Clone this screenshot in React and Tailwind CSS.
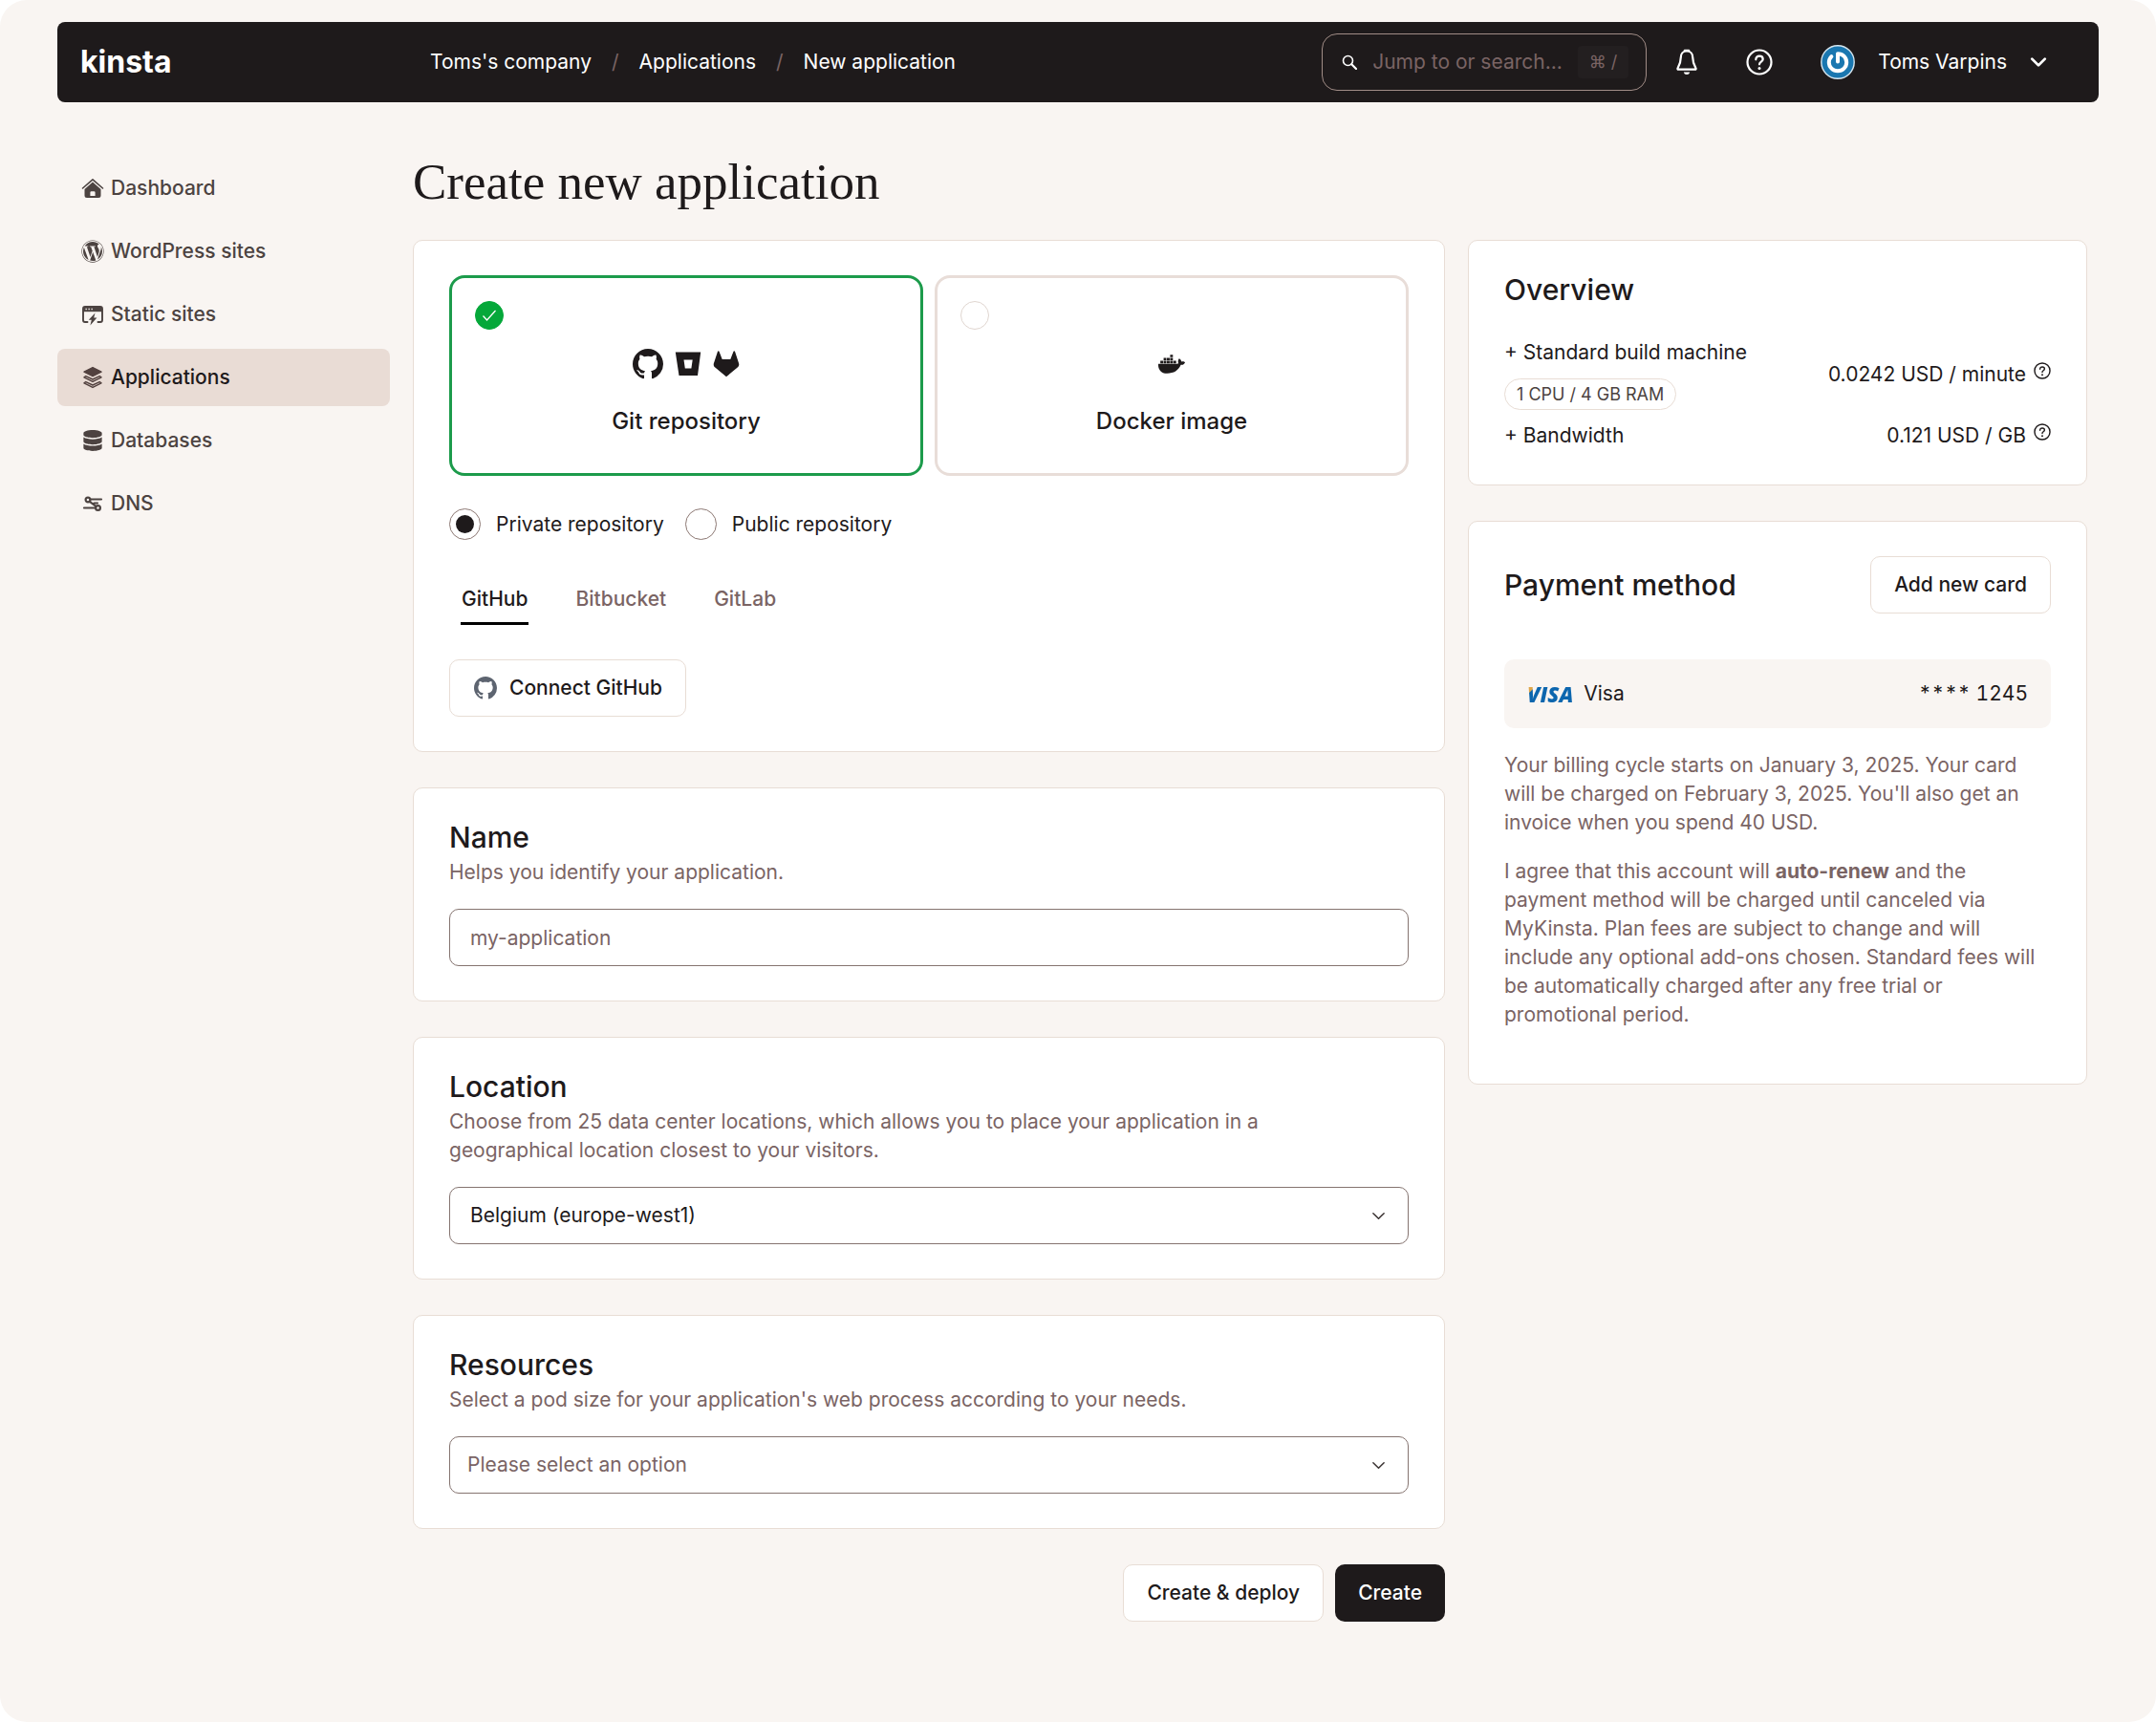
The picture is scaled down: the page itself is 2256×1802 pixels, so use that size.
import { useState } from "react";
import { FaWordpress, FaDatabase, FaDocker } from "react-icons/fa";

function GithubIcon({ className }) {
  return (
    <svg viewBox="0 0 16 16" className={className} fill="currentColor">
      <path d="M8 0C3.580 0 0 3.580 0 8c0 3.540 2.290 6.530 5.470 7.590.4.07.55-.17.55-.38 0-.19-.01-.82-.01-1.490-2.010.37-2.530-.49-2.690-.94-.09-.23-.48-.94-.82-1.130-.28-.15-.68-.52-.01-.53.63-.01 1.080.58 1.230.82.72 1.210 1.870.87 2.330.66.07-.52.28-.87.51-1.070-1.780-.2-3.640-.89-3.640-3.950 0-.87.31-1.590.82-2.150-.08-.2-.36-1.020.08-2.120 0 0 .67-.21 2.200.82.64-.18 1.320-.27 2-.27.68 0 1.360.09 2 .27 1.530-1.040 2.200-.82 2.200-.82.44 1.100.16 1.920.08 2.120.51.56.82 1.270.82 2.150 0 3.070-1.870 3.750-3.650 3.950.29.25.54.73.54 1.480 0 1.070-.01 1.930-.01 2.200 0 .21.15.46.55.38A8.013 8.013 0 0 0 16 8c0-4.420-3.580-8-8-8z" />
    </svg>
  );
}

function HomeIcon() {
  return (
    <svg viewBox="0 0 24 24" className="w-6 h-6" fill="none">
      <path d="M1.500 12 12 2.800 22.500 12" stroke="currentColor" strokeWidth="1.600" strokeLinecap="round" strokeLinejoin="round" />
      <path
        d="M12 5.600 20.500 13v6.500A2.500 2.500 0 0 1 18 22H6a2.500 2.500 0 0 1-2.500-2.500V13zM10.600 15.200a1.200 1.200 0 0 0-1.200 1.200V20h5.200v-3.600a1.200 1.200 0 0 0-1.200-1.200z"
        fill="currentColor"
        fillRule="evenodd"
      />
    </svg>
  );
}

function StaticIcon() {
  return (
    <svg viewBox="0 0 24 24" className="w-6 h-6" fill="none">
      <path
        d="M6.500 20H4a2 2 0 0 1-2-2V6a2 2 0 0 1 2-2h16a2 2 0 0 1 2 2v12a2 2 0 0 1-2 2h-2.500"
        stroke="currentColor"
        strokeWidth="1.900"
        strokeLinecap="round"
      />
      <path d="M2 4.500h20V9.200H2z" fill="currentColor" />
      <path d="M4.500 6.500h1.300M7.500 6.500h1.300M10.500 6.500h1.300" stroke="#f9f5f2" strokeWidth="1.300" />
      <path d="M14.500 10.500 7.800 17.800h3L9.400 23.500l7-8.100h-3.200z" fill="currentColor" />
    </svg>
  );
}

function LayersIcon() {
  return (
    <svg viewBox="0 0 24 24" className="w-6 h-6" fill="none" stroke="currentColor" strokeWidth="1.500" strokeLinejoin="round" strokeLinecap="round">
      <path d="m12 1.600 9 4.500-9 4.500-9-4.500z" fill="currentColor" />
      <path d="M4.800 10.600 3 11.800l9 4.600 9-4.600-1.800-1.200L12 14z" />
      <path d="M4.800 16.600 3 17.800l9 4.600 9-4.600-1.800-1.200L12 20z" />
    </svg>
  );
}

function DnsIcon() {
  return (
    <svg viewBox="0 0 24 24" className="w-6 h-6" fill="none" stroke="currentColor" strokeWidth="2.200" strokeLinecap="round">
      <circle cx="7" cy="8" r="2.400" />
      <circle cx="17.500" cy="16.500" r="2.400" />
      <path d="M9.500 7.500H21M3 16.500h12M8.800 9.800l6.800 5.200M13.500 11.500H17" />
    </svg>
  );
}

function BitbucketIcon() {
  return (
    <svg viewBox="0 0 28 28" className="w-7 h-7" fill="currentColor">
      <path d="M.8 1.500h26.400L24 26H4.500zM9.500 9.500l1.300 9h6.600l1.300-9z" fillRule="evenodd" />
    </svg>
  );
}

function GitlabIcon() {
  return (
    <svg viewBox="0 0 28 28" className="w-7 h-7" fill="currentColor">
      <path d="M5 .8c.3-.7 1.200-.7 1.500 0L9.700 9h8.600L21.500.8c.3-.7 1.200-.7 1.500 0l4.100 12.500c.5 1.700 0 3.200-1.400 4.200L14 27.200 2.300 17.500C1 16.500.4 15 .9 13.300z" />
    </svg>
  );
}

function HelpIcon({ className }) {
  return (
    <svg viewBox="0 0 28 28" className={className} fill="none" stroke="currentColor" strokeWidth="2.200">
      <circle cx="14" cy="14" r="12.500" />
      <path d="M10.300 11.300c0-2.200 1.600-3.600 3.700-3.600s3.700 1.400 3.700 3.300c0 2.600-3.700 2.700-3.700 5.300" strokeLinecap="round" />
      <circle cx="14" cy="20.500" r="1.500" fill="currentColor" stroke="none" />
    </svg>
  );
}

function BellIcon() {
  return (
    <svg viewBox="0 0 28 28" className="w-7 h-7" fill="none" stroke="currentColor" strokeWidth="2.200" strokeLinejoin="round">
      <path d="M14 2.500c-4 0-6.200 3-6.200 6.500 0 5.500-1.200 7.800-3.300 11.500-.3.700 0 1.200.8 1.200h17.400c.8 0 1.100-.5.800-1.200-2.100-3.700-3.300-6-3.300-11.500 0-3.500-2.200-6.500-6.200-6.500z" />
      <path d="M11.800 1.800h4.400" strokeLinecap="round" />
      <path d="M10.800 24.500h6.400c-.4 1.700-1.600 2.500-3.200 2.500s-2.800-.8-3.200-2.500z" fill="currentColor" stroke="none" />
    </svg>
  );
}

function Chevron({ className }) {
  return (
    <svg viewBox="0 0 16 16" className={className} fill="none" stroke="currentColor" strokeLinecap="round" strokeLinejoin="round">
      <path d="m2 5 6 6 6-6" />
    </svg>
  );
}

function Avatar() {
  return (
    <svg viewBox="0 0 36 36" className="w-9 h-9" fill="none">
      <circle cx="18" cy="18" r="17.200" fill="#1a77b0" stroke="#d5e5ee" strokeWidth="1.400" />
      <path d="M18 17.500V9.300c5.400 0 9.200 4 9.200 9s-4 9-9.200 9-9.200-4-9.200-9c0-2.500 1-4.600 2.600-6.200" stroke="#fff" strokeWidth="4" strokeLinecap="round" strokeLinejoin="round" />
    </svg>
  );
}

const navItems = [
  { label: "Dashboard", icon: <HomeIcon /> },
  { label: "WordPress sites", icon: <FaWordpress className="w-6 h-6" /> },
  { label: "Static sites", icon: <StaticIcon /> },
  { label: "Applications", icon: <LayersIcon />, active: true },
  { label: "Databases", icon: <FaDatabase className="w-6 h-[22px]" /> },
  { label: "DNS", icon: <DnsIcon /> },
];

const crumbs = ["Toms's company", "Applications", "New application"];
const providers = ["GitHub", "Bitbucket", "GitLab"];

const secondaryButton =
  "h-[60px] px-6 flex items-center gap-3 rounded-[10px] border border-[#e8ddd5] bg-white font-medium";

function Header() {
  return (
    <header className="h-[84px] flex items-center rounded-lg bg-[#1e1a1b] text-white pl-6 pr-[54px]">
      <a href="#" className="w-[366px] text-[32px] leading-none font-bold">kinsta</a>
      <nav className="flex-1 flex items-center gap-[21px]">
        {crumbs.map((crumb, i) => (
          <span key={crumb} className="flex gap-[21px]">
            {i > 0 && <span className="text-[#7a6464]">/</span>}
            <a href="#">{crumb}</a>
          </span>
        ))}
      </nav>
      <label className="w-[340px] h-[60px] flex items-center rounded-2xl border border-[#a08c86] pl-5 pr-[18px]">
        <svg viewBox="0 0 16 16" className="w-4 h-4 shrink-0 mr-4" fill="none" stroke="currentColor" strokeWidth="1.600" strokeLinecap="round">
          <circle cx="6.500" cy="6.500" r="5" />
          <path d="m10.300 10.300 4.700 4.700" strokeWidth="2.200" />
        </svg>
        <input
          type="text"
          aria-label="Search"
          placeholder="Jump to or search..."
          className="flex-1 min-w-0 bg-transparent outline-none placeholder:text-[#7a6464]"
        />
        <kbd className="h-[34px] px-3 flex items-center rounded bg-[#231f20] text-[18px] text-[#7a6464] font-[Inter,sans-serif]">⌘ /</kbd>
      </label>
      <button type="button" aria-label="Notifications" className="ml-7"><BellIcon /></button>
      <button type="button" aria-label="Help" className="ml-12"><HelpIcon className="w-7 h-7" /></button>
      <button type="button" className="ml-[50px] flex items-center">
        <Avatar />
        <span className="ml-6 mr-6">Toms Varpins</span>
        <Chevron className="w-[18px] h-[18px] stroke-[2.500]" />
      </button>
    </header>
  );
}

function Sidebar() {
  return (
    <nav className="w-[348px] shrink-0 flex flex-col gap-[6px]">
      {navItems.map(item => (
        <a
          key={item.label}
          href="#"
          className={
            item.active
              ? "h-[60px] px-[25px] flex items-center gap-[7px] rounded-lg bg-[#e9dcd5] font-medium text-[#1e1a1b]"
              : "h-[60px] px-[25px] flex items-center gap-[7px] rounded-lg font-medium text-[#4c4341]"
          }
        >
          <span className={item.active ? "w-6 text-[#52413f]" : "w-6"}>{item.icon}</span>
          {item.label}
        </a>
      ))}
    </nav>
  );
}

function Card({ children }) {
  return <section className="rounded-[10px] border border-[#e8ddd5] bg-white px-[37px] py-9">{children}</section>;
}

function SectionTitle({ title, text, htmlFor }) {
  return (
    <div className="mb-[23px]">
      <h2 className="mb-[7px] text-[30px] leading-[30px] font-medium">
        <label htmlFor={htmlFor}>{title}</label>
      </h2>
      <p className="max-w-[900px] text-[#7a6464]">{text}</p>
    </div>
  );
}

function SourceOption({ label, checked, onChange, children }) {
  return (
    <label
      className={
        checked
          ? "flex-1 flex flex-col items-center rounded-2xl border-3 border-[#1c9b4b] px-6 pt-6 pb-[39px]"
          : "flex-1 flex flex-col items-center rounded-2xl border-3 border-[#e8ddd8] px-6 pt-6 pb-[39px]"
      }
    >
      <span className="self-start grid w-[30px] h-[30px]">
        <input
          type="radio"
          name="source"
          checked={checked}
          onChange={onChange}
          className="col-start-1 row-start-1 w-[30px] h-[30px] appearance-none rounded-full border border-[#e0d6d0] checked:border-[#05a83a] checked:bg-[#05a83a]"
        />
        {checked && (
          <svg viewBox="0 0 30 30" className="col-start-1 row-start-1 w-[30px] h-[30px]" fill="none" stroke="#fff" strokeWidth="1.300">
            <path d="m8.500 15.500 4 4.500 9-10" />
          </svg>
        )}
      </span>
      <span className="mt-5 h-8 flex items-center justify-center gap-3">{children}</span>
      <span className="mt-[29px] text-[24px] leading-[30px] font-medium">{label}</span>
    </label>
  );
}

function RepoRadio({ label, checked, onChange }) {
  return (
    <label className="flex items-center gap-4">
      <span className="grid place-items-center">
        <input
          type="radio"
          name="visibility"
          checked={checked}
          onChange={onChange}
          className="col-start-1 row-start-1 w-[33px] h-[33px] appearance-none rounded-full border border-[#8c7873] bg-white"
        />
        {checked && <span className="col-start-1 row-start-1 w-[19px] h-[19px] rounded-full bg-[#1e1a1b]" />}
      </span>
      {label}
    </label>
  );
}

function SourceCard() {
  const [source, setSource] = useState("git");
  const [visibility, setVisibility] = useState("private");
  const [provider, setProvider] = useState("GitHub");

  return (
    <Card>
      <div className="flex gap-3">
        <SourceOption label="Git repository" checked={source === "git"} onChange={() => setSource("git")}>
          <GithubIcon className="w-8 h-8" />
          <BitbucketIcon />
          <GitlabIcon />
        </SourceOption>
        <SourceOption label="Docker image" checked={source === "docker"} onChange={() => setSource("docker")}>
          <FaDocker className="w-7 h-7" />
        </SourceOption>
      </div>
      <div className="mt-[34px] flex gap-[22px]">
        <RepoRadio label="Private repository" checked={visibility === "private"} onChange={() => setVisibility("private")} />
        <RepoRadio label="Public repository" checked={visibility === "public"} onChange={() => setVisibility("public")} />
      </div>
      <div role="tablist" className="mt-[47px] px-3 flex gap-12">
        {providers.map(name => (
          <button
            key={name}
            type="button"
            role="tab"
            aria-selected={provider === name}
            onClick={() => setProvider(name)}
            className={
              provider === name
                ? "px-px pb-[9px] border-b-3 border-black font-medium"
                : "px-px pb-[9px] border-b-3 border-transparent font-medium text-[#7a6464]"
            }
          >
            {name}
          </button>
        ))}
      </div>
      <div className="mt-9 flex">
        <button type="button" className={secondaryButton}>
          <GithubIcon className="w-[26px] h-6 text-[#5d6470]" />
          Connect GitHub
        </button>
      </div>
    </Card>
  );
}

function SelectField({ id, className, children }) {
  return (
    <div className="grid items-center">
      <select
        id={id}
        className={`col-start-1 row-start-1 w-full h-[60px] appearance-none rounded-[10px] border border-[#857470] bg-white ${className}`}
      >
        {children}
      </select>
      <Chevron className="col-start-1 row-start-1 justify-self-end mr-6 w-[15px] h-[15px] stroke-[1.600] text-[#3a3332] pointer-events-none" />
    </div>
  );
}

function Overview() {
  return (
    <Card>
      <h2 className="text-[30px] leading-[30px] font-medium">Overview</h2>
      <div className="mt-9 flex items-center justify-between">
        <div>
          <p>+ Standard build machine</p>
          <span className="mt-3 flex w-fit h-[33px] items-center rounded-full border border-[#e8ddd5] px-3 text-[18px] text-[#4c4341]">
            1 CPU / 4 GB RAM
          </span>
        </div>
        <p className="flex gap-2">
          0.0242 USD / minute <HelpIcon className="mt-[2px] w-[18px] h-[18px]" />
        </p>
      </div>
      <div className="mt-3 flex justify-between">
        <p>+ Bandwidth</p>
        <p className="flex gap-2">
          0.121 USD / GB <HelpIcon className="mt-[2px] w-[18px] h-[18px]" />
        </p>
      </div>
    </Card>
  );
}

function Payment() {
  return (
    <Card>
      <div className="flex items-center justify-between">
        <h2 className="text-[30px] leading-[30px] font-medium">Payment method</h2>
        <button type="button" className={secondaryButton}>Add new card</button>
      </div>
      <div className="mt-12 h-[72px] px-6 flex items-center rounded-[10px] bg-[#f9f5f2]">
        <span className="pr-px bg-[linear-gradient(135deg,#dfa64a_17%,#0c66ae_19%)] bg-clip-text text-transparent font-['Open_Sans',sans-serif] text-[22px] leading-[24px] font-extrabold italic">
          VISA
        </span>
        <span className="ml-[10px]">Visa</span>
        <span className="ml-auto tabular-nums">**** 1245</span>
      </div>
      <p className="mt-6 text-[#7a6464]">
        Your billing cycle starts on January 3, 2025. Your card will be charged on February 3, 2025. You'll also get an
        invoice when you spend 40 USD.
      </p>
      <p className="my-[21px] text-[#7a6464]">
        I agree that this account will <b className="font-bold">auto-renew</b> and the payment method will be charged
        until canceled via MyKinsta. Plan fees are subject to change and will include any optional add-ons chosen.
        Standard fees will be automatically charged after any free trial or promotional period.
      </p>
    </Card>
  );
}

export default function App() {
  return (
    <div className="bg-white">
      <div className="min-h-screen rounded-[28px] bg-[#f9f5f2] px-[60px] pt-[23px] pb-[100px] font-[Inter,sans-serif] text-[21px] leading-[30px] text-[#1e1a1b]">
        <Header />
        <div className="mt-[60px] flex gap-6 pr-3">
          <Sidebar />
          <main className="flex-1 min-w-0">
            <h1 className="mb-[38px] font-['Liberation_Serif',serif] text-[53px] leading-[46px]">Create new application</h1>
            <div className="grid grid-cols-[5fr_3fr] items-start gap-6">
              <form className="flex flex-col gap-[37px]" onSubmit={e => e.preventDefault()}>
                <SourceCard />
                <Card>
                  <SectionTitle htmlFor="name" title="Name" text="Helps you identify your application." />
                  <input
                    id="name"
                    type="text"
                    placeholder="my-application"
                    className="w-full h-[60px] rounded-[10px] border border-[#857470] px-[21px] placeholder:text-[#7a6464]"
                  />
                </Card>
                <Card>
                  <SectionTitle
                    htmlFor="location"
                    title="Location"
                    text="Choose from 25 data center locations, which allows you to place your application in a geographical location closest to your visitors."
                  />
                  <SelectField id="location" className="px-[21px]">
                    <option>Belgium (europe-west1)</option>
                  </SelectField>
                </Card>
                <Card>
                  <SectionTitle
                    htmlFor="resources"
                    title="Resources"
                    text="Select a pod size for your application's web process according to your needs."
                  />
                  <SelectField id="resources" className="px-[18px] text-[#7a6464]">
                    <option>Please select an option</option>
                  </SelectField>
                </Card>
                <div className="flex justify-end gap-3">
                  <button type="submit" className={secondaryButton}>Create &amp; deploy</button>
                  <button type="submit" className="h-[60px] px-6 rounded-[10px] bg-[#1e1a1b] font-medium text-white">
                    Create
                  </button>
                </div>
              </form>
              <aside className="flex flex-col gap-[37px]">
                <Overview />
                <Payment />
              </aside>
            </div>
          </main>
        </div>
      </div>
    </div>
  );
}
